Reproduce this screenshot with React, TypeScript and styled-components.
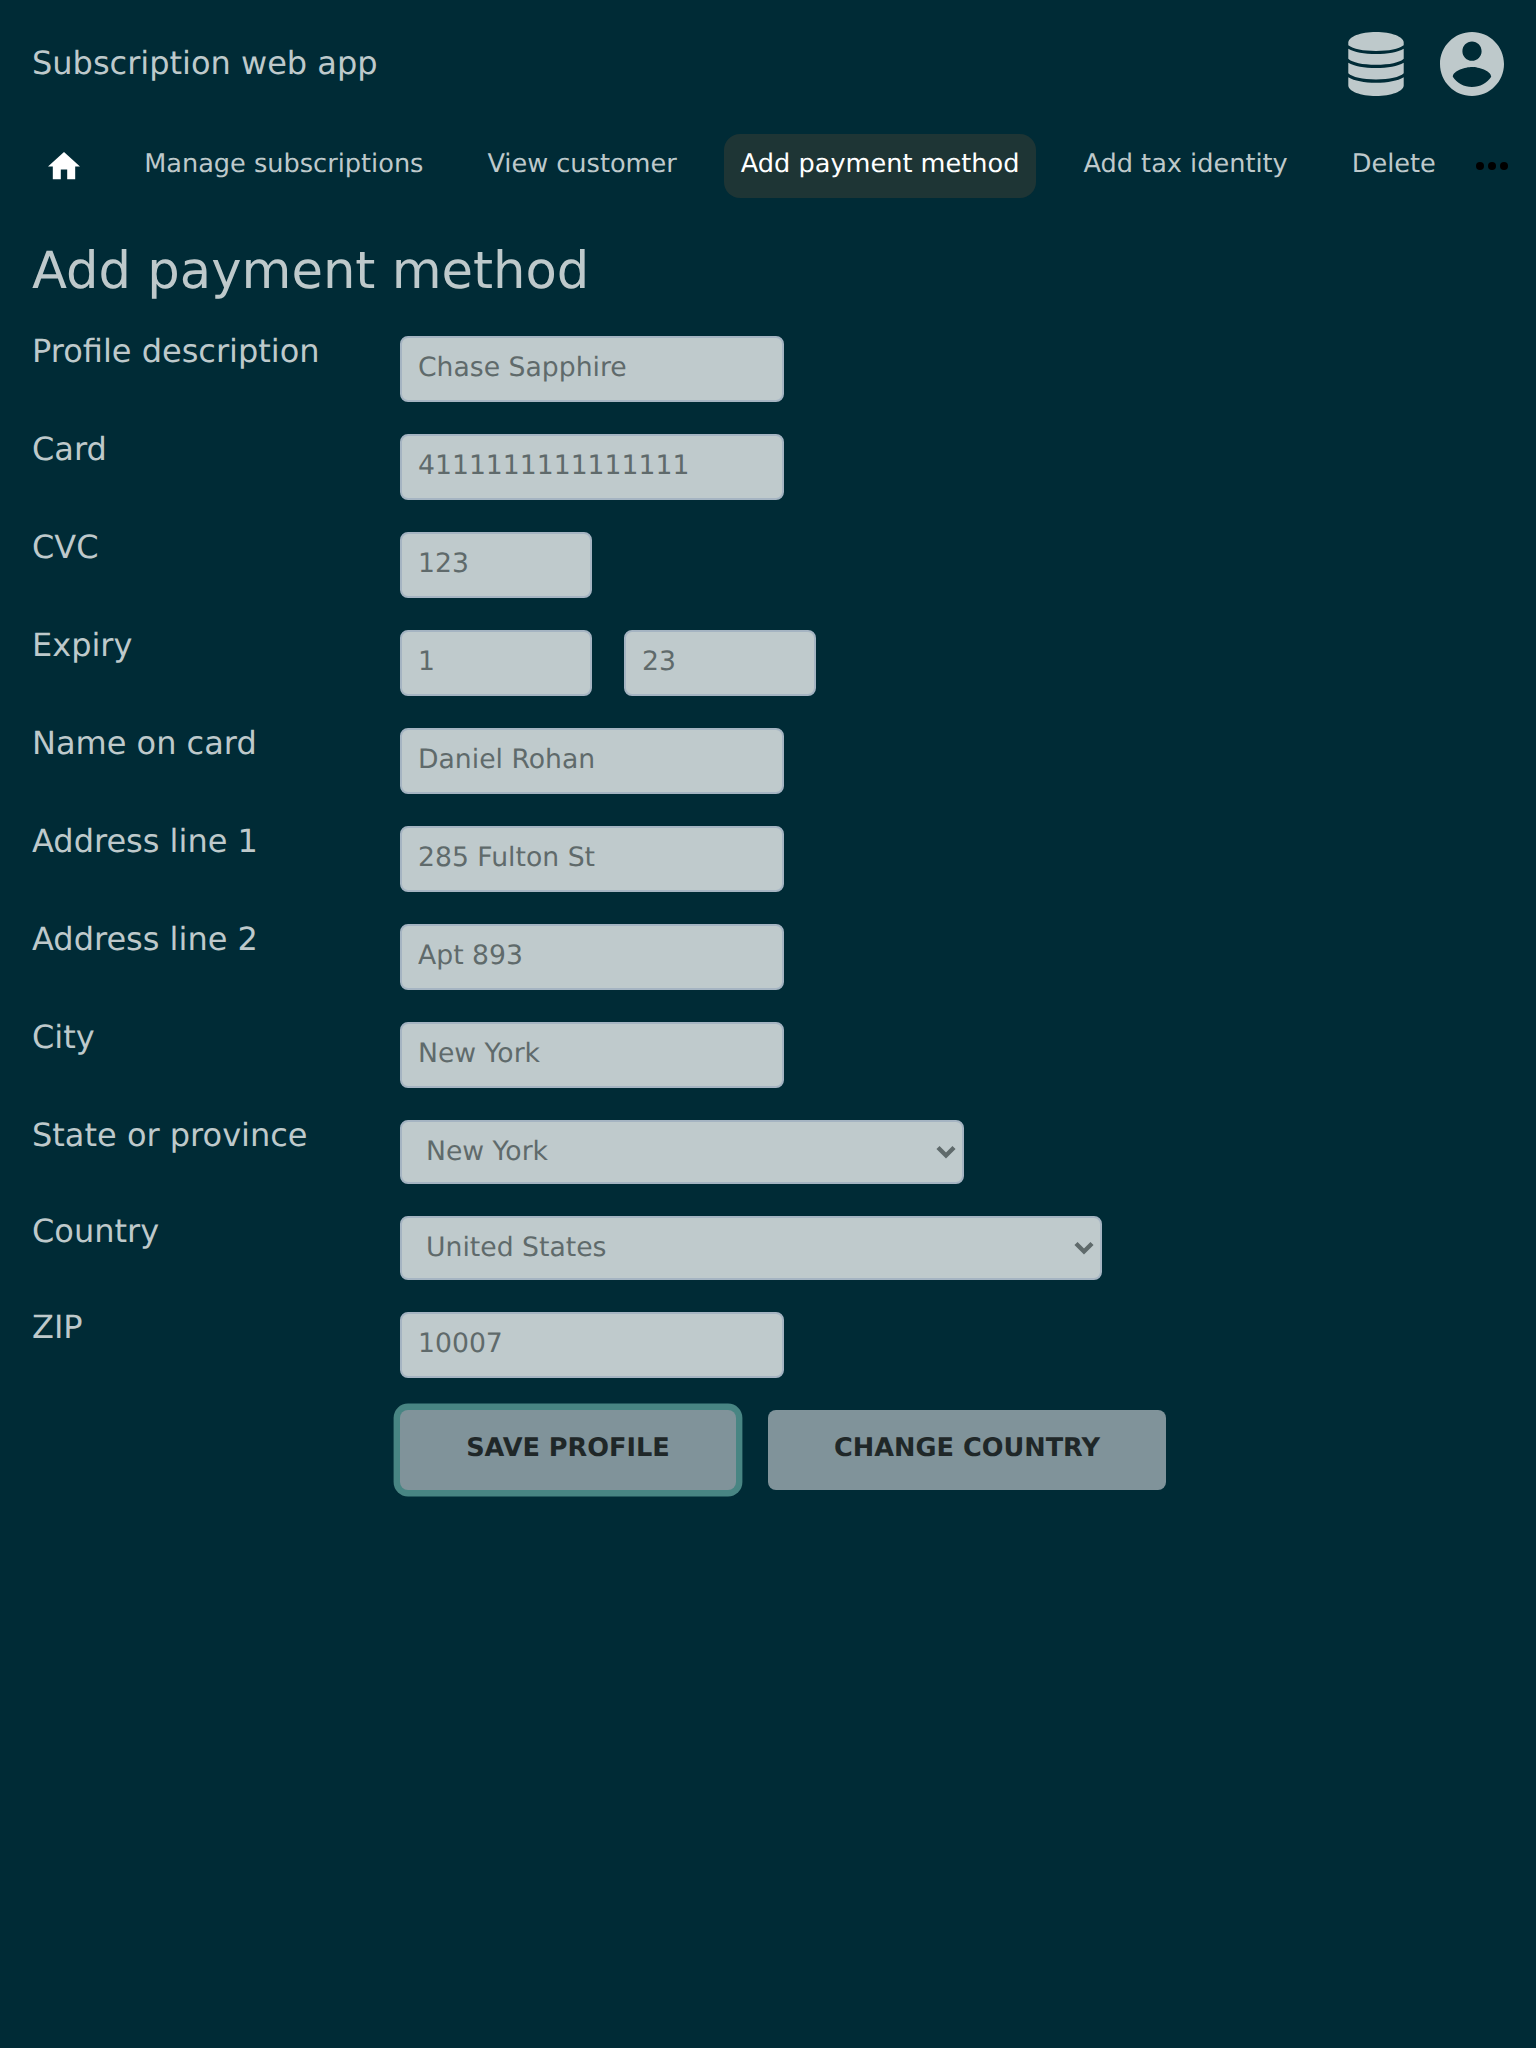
import React from 'react';
import styled, { createGlobalStyle } from 'styled-components';

const ink = '#bec9cb';

const GlobalStyle = createGlobalStyle`
  * { box-sizing: border-box; }
  html { background: #002b36; }
  body {
    margin: 0;
    min-height: 2048px;
    background: #002b36;
    color: ${ink};
    font: 32px/48px "DejaVu Sans", sans-serif;
    text-rendering: geometricPrecision;
  }
`;

const TopBar = styled.header`
  display: flex;
  justify-content: space-between;
  align-items: flex-start;
  height: 134px;
  padding: 32px 32px 0;
`;

const Brand = styled.div`
  padding-top: 7px;
`;

const TopIcons = styled.div`
  display: flex;
  gap: 36px;
  svg { display: block; }
`;

const Nav = styled.nav`
  display: flex;
  align-items: flex-start;
  height: 64px;
  padding: 0 28px 0 48px;
  font-size: 25.6px;
  line-height: 38px;
`;

const HomeLink = styled.a`
  display: flex;
  width: 32px;
  margin: 18.4px 47.6px 0 0;
`;

const NavItem = styled.a<{ $active?: boolean }>`
  height: 64px;
  margin-right: 31.2px;
  padding: 11px 16.2px 0 16.6px;
  border-radius: 16px;
  white-space: nowrap;
  color: ${p => (p.$active ? '#ffffff' : ink)};
  background: ${p => (p.$active ? '#1e3535' : 'transparent')};
  &:nth-last-child(2) { margin-right: 0; }
`;

const More = styled.a`
  display: flex;
  width: 32px;
  margin: 28px 0 0 auto;
`;

const Main = styled.main`
  padding: 35px 32px 0;
`;

const Title = styled.h1`
  margin: 0 0 26px;
  font-size: 51.2px;
  font-weight: 400;
  line-height: 77px;
`;

const Form = styled.form`
  display: flex;
  flex-direction: column;
  gap: 32px;
`;

const Row = styled.div`
  display: grid;
  grid-template-columns: 368px 1fr;
  align-items: start;
`;

const Label = styled.label`
  height: 30px;
  margin-top: -9px;
`;

const Fields = styled.div`
  display: flex;
  gap: 32px;
`;

const Input = styled.input<{ $w: number }>`
  width: ${p => p.$w}px;
  height: 66px;
  margin: 0;
  padding: 0 16px 3px;
  border: 2px solid #a5b4c2;
  border-radius: 8px;
  outline: none;
  background: #bfcacc;
  color: #5f6a6b;
  font: 26.667px "DejaVu Sans", sans-serif;
  text-rendering: inherit;
`;

const SelectBox = styled.div<{ $w: number }>`
  display: flex;
  justify-content: space-between;
  align-items: center;
  width: ${p => p.$w}px;
  height: 64px;
  padding: 0 6px 1px 24px;
  border: 2px solid #a5b4c2;
  border-radius: 8px;
  background: #bfcacc;
  color: #5f6a6b;
  font-size: 26.667px;
  line-height: 32px;
  svg { margin-top: 1px; }
`;

const Button = styled.button<{ $w: number; $focus?: boolean }>`
  width: ${p => p.$w}px;
  height: 80px;
  padding: 0 0 4px;
  border: 0;
  border-radius: 8px;
  background: #80939a;
  color: #1f2728;
  font: 700 25.6px "DejaVu Sans", sans-serif;
  text-rendering: inherit;
  text-transform: uppercase;
  white-space: nowrap;
  box-shadow: ${p => (p.$focus ? '0 0 0 6.4px #488583' : 'none')};
`;

const DatabaseIcon = () => (
  <svg width="56" height="64" viewBox="-0.3 0 56.6 64" preserveAspectRatio="none" fill={ink}>
    <path d="M0 10.500C0 4.700 12.500 0 28 0s28 4.700 28 10.500V13.300C51 17 41 19 28 19S5 17 0 13.300z" />
    <path d="M0 16.700c6 3.500 16 5.300 28 5.300s22-1.800 28-5.300v10c-4 3.900-14.500 6-28 6S4 30.600 0 26.700z" />
    <path d="M0 30.800c6 3.500 16 5.300 28 5.300s22-1.800 28-5.300v10.500c-4 3.900-14.500 6.200-28 6.200S4 45.200 0 41.300z" />
    <path d="M0 45.200c6 3.600 16 5.500 28 5.500s22-1.900 28-5.500v8.300C56 59.300 43.500 64 28 64S0 59.300 0 53.500z" />
  </svg>
);

const AccountIcon = () => (
  <svg width="64" height="64" viewBox="2 2 20 20" fill={ink}>
    <path d="M12 2C6.480 2 2 6.480 2 12s4.480 10 10 10 10-4.480 10-10S17.520 2 12 2zm0 3c1.660 0 3 1.340 3 3s-1.340 3-3 3-3-1.340-3-3 1.340-3 3-3zm0 14.200c-2.500 0-4.710-1.280-6-3.220.030-1.990 4-3.080 6-3.080 1.990 0 5.970 1.090 6 3.080-1.290 1.940-3.500 3.220-6 3.220z" />
  </svg>
);

const HomeIcon = () => (
  <svg width="32" height="27.2" viewBox="2 3 20 17" fill="#fff">
    <path d="M10 20v-6h4v6h5v-8h3L12 3 2 12h3v8z" />
  </svg>
);

const DotsIcon = () => (
  <svg width="32" height="8" viewBox="0 0 32 8">
    <circle cx="4" cy="4" r="4" />
    <circle cx="16" cy="4" r="4" />
    <circle cx="28" cy="4" r="4" />
  </svg>
);

const Chevron = () => (
  <svg width="20" height="14" viewBox="0 0 20 14" fill="none" stroke="#5f6a6b" strokeWidth="4.4">
    <path d="M2 2.500l8 8 8-8" />
  </svg>
);

type Field = { label: string; values?: [string, number][]; select?: [string, number] };

const fields: Field[] = [
  { label: 'Profile description', values: [['Chase Sapphire', 384]] },
  { label: 'Card', values: [['4111111111111111', 384]] },
  { label: 'CVC', values: [['123', 192]] },
  { label: 'Expiry', values: [['1', 192], ['23', 192]] },
  { label: 'Name on card', values: [['Daniel Rohan', 384]] },
  { label: 'Address line 1', values: [['285 Fulton St', 384]] },
  { label: 'Address line 2', values: [['Apt 893', 384]] },
  { label: 'City', values: [['New York', 384]] },
  { label: 'State or province', select: ['New York', 564] },
  { label: 'Country', select: ['United States', 702] },
  { label: 'ZIP', values: [['10007', 384]] },
];

export default function App() {
  return (
    <>
      <GlobalStyle />
      <TopBar>
        <Brand>Subscription web app</Brand>
        <TopIcons>
          <DatabaseIcon />
          <AccountIcon />
        </TopIcons>
      </TopBar>
      <Nav>
        <HomeLink><HomeIcon /></HomeLink>
        <NavItem>Manage subscriptions</NavItem>
        <NavItem>View customer</NavItem>
        <NavItem $active>Add payment method</NavItem>
        <NavItem>Add tax identity</NavItem>
        <NavItem>Delete</NavItem>
        <More><DotsIcon /></More>
      </Nav>
      <Main>
        <Title>Add payment method</Title>
        <Form>
          {fields.map(f => (
            <Row key={f.label}>
              <Label>{f.label}</Label>
              <Fields>
                {f.values?.map(([v, w]) => <Input key={v} $w={w} defaultValue={v} />)}
                {f.select && (
                  <SelectBox $w={f.select[1]}>
                    <span>{f.select[0]}</span>
                    <Chevron />
                  </SelectBox>
                )}
              </Fields>
            </Row>
          ))}
          <Row>
            <span />
            <Fields>
              <Button type="button" $w={336} $focus>Save profile</Button>
              <Button type="button" $w={398}>Change country</Button>
            </Fields>
          </Row>
        </Form>
      </Main>
    </>
  );
}
